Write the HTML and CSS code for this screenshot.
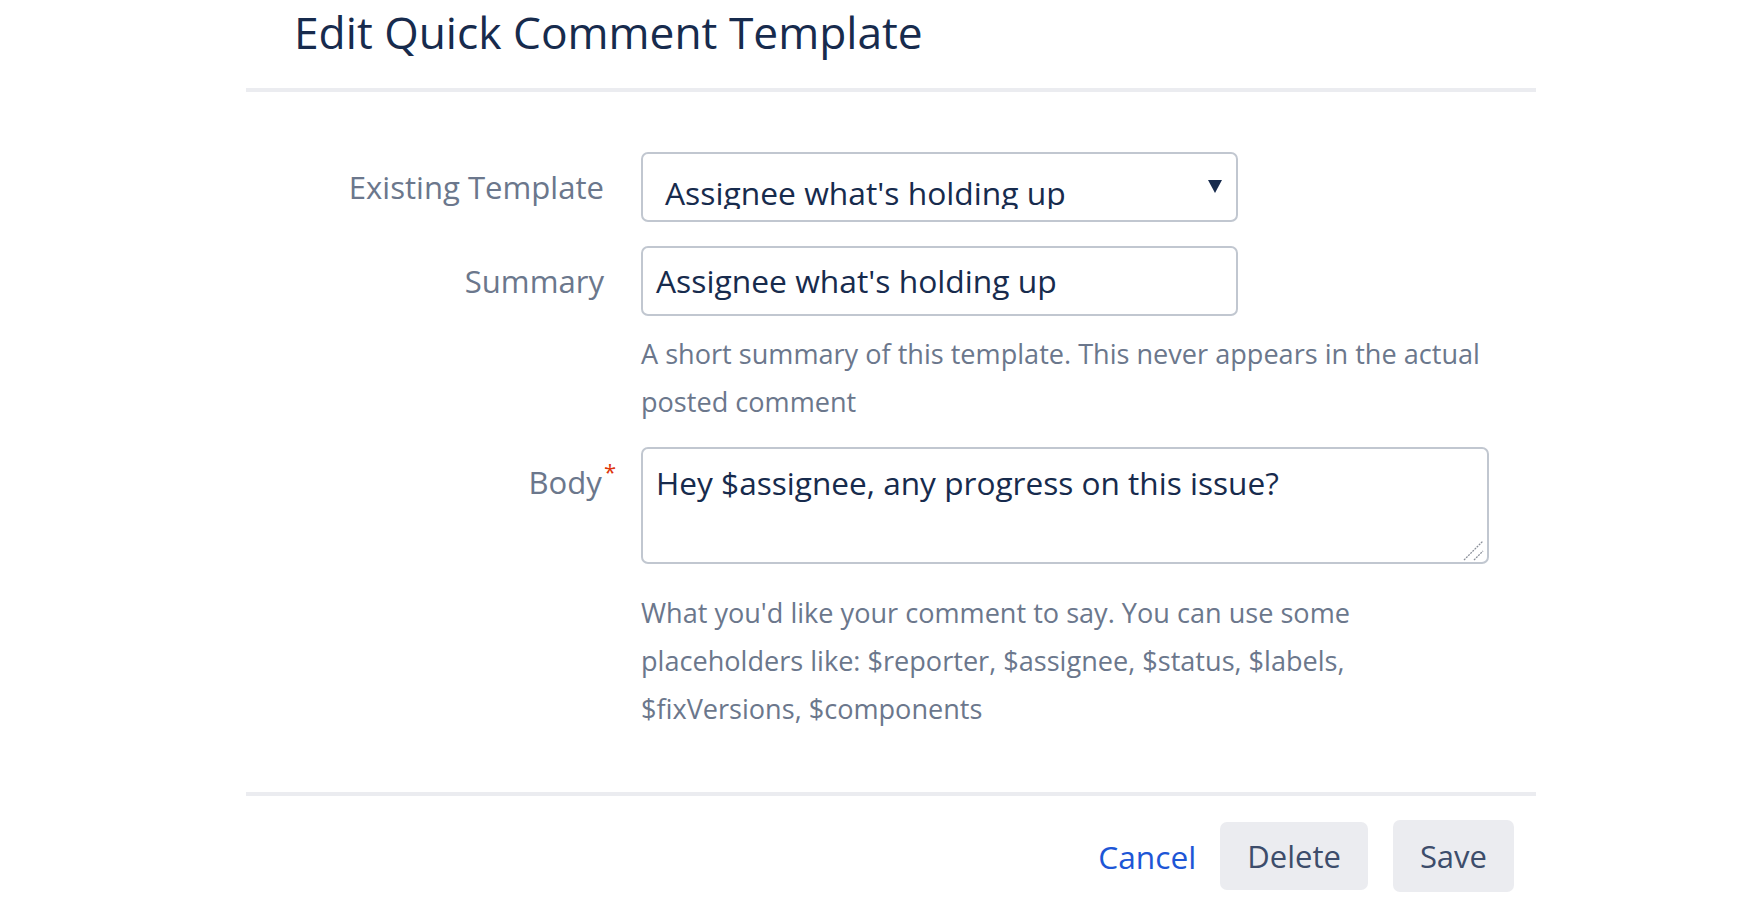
FILE: index.html
```html
<!DOCTYPE html>
<html lang="en">
<head>
  <meta charset="UTF-8">
  <meta name="viewport" content="width=device-width, initial-scale=1.0">
  <title>Edit Quick Comment Template</title>
  <link rel="stylesheet" href="styles.css">
</head>
<body>
  <div class="dialog">
    <div class="dialog-header">
      <h2 class="dialog-title">Edit Quick Comment Template</h2>
    </div>

    <form class="dialog-body">
      <div class="field-group field-select">
        <label class="field-label">Existing Template</label>
        <div class="field-body">
          <div class="select">
            <span class="select-value">Assignee what's holding up</span>
            <svg class="select-arrow" width="14" height="13" viewBox="0 0 14 13">
              <polygon points="0,0 14,0 7,13" fill="#172b4d"/>
            </svg>
          </div>
        </div>
      </div>

      <div class="field-group">
        <label class="field-label">Summary</label>
        <div class="field-body">
          <div class="text-input">Assignee what's holding up</div>
          <div class="description">A short summary of this template. This never appears in the actual posted comment</div>
        </div>
      </div>

      <div class="field-group field-body-group">
        <label class="field-label label-top">Body<span class="required">*</span></label>
        <div class="field-body">
          <div class="textarea">
            Hey $assignee, any progress on this issue?
            <svg class="resize-grip" width="22" height="22" viewBox="0 0 22 22">
              <line x1="1" y1="21" x2="20" y2="2" stroke="#8a8f99" stroke-width="1.3" stroke-dasharray="2 1"/>
              <line x1="11" y1="21" x2="20" y2="12" stroke="#8a8f99" stroke-width="1.3" stroke-dasharray="2 1"/>
            </svg>
          </div>
          <div class="description description-body">What you'd like your comment to say. You can use some placeholders like: $reporter, $assignee, $status, $labels, $fixVersions, $components</div>
        </div>
      </div>
    </form>

    <div class="dialog-footer">
      <a class="cancel" href="#">Cancel</a>
      <button class="btn btn-delete" type="button">Delete</button>
      <button class="btn btn-save" type="button">Save</button>
    </div>
  </div>
</body>
</html>
```

FILE: styles.css
```css
html, body {
  margin: 0;
  padding: 0;
  background: #fff;
  font-family: 'Open Sans', 'Noto Sans', sans-serif;
  color: #172b4d;
}
.dialog {
  margin-left: 246px;
  width: 1290px;
}
.dialog-header {
  padding: 2px 0 0 48px;
  border-bottom: 4px solid #ebecf0;
  height: 92px;
  box-sizing: border-box;
}
.dialog-title {
  margin: 0;
  font-size: 44.3px;
  font-weight: 400;
  line-height: 60px;
  color: #172b4d;
}
.dialog-body {
  margin: 0;
  padding: 60px 0 59px;
}
.field-group {
  display: flex;
  gap: 37px;
}
.field-select {
  margin-bottom: 24px;
}
.field-body-group {
  margin-top: 21px;
}
.field-label {
  width: 358px;
  flex-shrink: 0;
  text-align: right;
  font-size: 31.1px;
  line-height: 70px;
  color: #6b778c;
}
.label-top {
  padding-top: 13px;
  line-height: 45px;
}
.required {
  color: #de350b;
  font-size: 22px;
  vertical-align: 14px;
  line-height: 0;
  margin-right: -12px;
  margin-left: 2px;
}
.field-body {
  width: 848px;
}
.select {
  display: flex;
  align-items: flex-start;
  width: 597px;
  height: 70px;
  box-sizing: border-box;
  border: 2px solid #c1c7d0;
  border-radius: 7px;
}
.select-value {
  flex: 1;
  display: block;
  height: 55px;
  box-sizing: border-box;
  padding: 16px 0 0 22px;
  overflow: hidden;
  font-size: 31.8px;
  line-height: 45px;
  white-space: nowrap;
}
.select-arrow {
  margin: 26px 14px 0 0;
}
.text-input {
  width: 597px;
  height: 70px;
  box-sizing: border-box;
  border: 2px solid #c1c7d0;
  border-radius: 7px;
  padding: 0 13px;
  font-size: 31.8px;
  line-height: 66px;
  white-space: nowrap;
}
.description {
  margin-top: 14px;
  font-size: 27.1px;
  line-height: 48px;
  color: #6b778c;
}
.description-body {
  margin-top: 25px;
}
.textarea {
  position: relative;
  width: 848px;
  height: 117px;
  box-sizing: border-box;
  border: 2px solid #c1c7d0;
  border-radius: 7px;
  padding: 11px 13px;
  font-size: 31.6px;
  line-height: 45px;
}
.resize-grip {
  position: absolute;
  right: 2px;
  bottom: 1px;
}
.dialog-footer {
  display: flex;
  justify-content: flex-end;
  align-items: center;
  border-top: 4px solid #ebecf0;
  padding: 24px 22px 0 0;
}
.cancel {
  color: #1d56d6;
  text-decoration: none;
  font-size: 31.7px;
  margin-right: 24px;
}
.btn {
  background: #ebecf0;
  border: none;
  border-radius: 7px;
  padding: 0 27px;
  font-family: inherit;
  font-size: 31px;
  color: #3d4d6b;
  cursor: pointer;
}
.btn-delete {
  height: 68px;
  margin-right: 25px;
}
.btn-save {
  height: 72px;
}
```
